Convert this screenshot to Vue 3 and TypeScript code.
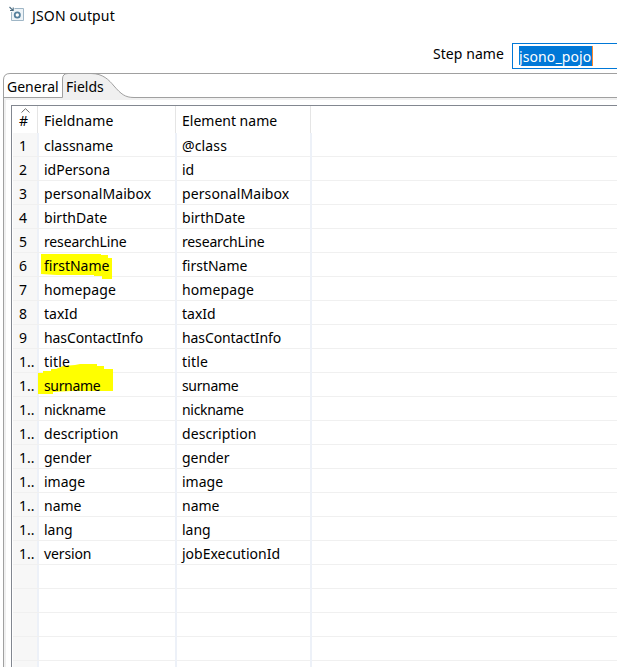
<script setup lang="ts">
interface FieldRow {
  no: string
  field: string
  element: string
  mark?: 'first' | 'surname'
}

const names: [string, string][] = [
  ['classname', '@class'],
  ['idPersona', 'id'],
  ['personalMaibox', 'personalMaibox'],
  ['birthDate', 'birthDate'],
  ['researchLine', 'researchLine'],
  ['firstName', 'firstName'],
  ['homepage', 'homepage'],
  ['taxId', 'taxId'],
  ['hasContactInfo', 'hasContactInfo'],
  ['title', 'title'],
  ['surname', 'surname'],
  ['nickname', 'nickname'],
  ['description', 'description'],
  ['gender', 'gender'],
  ['image', 'image'],
  ['name', 'name'],
  ['lang', 'lang'],
  ['version', 'jobExecutionId'],
  ['', ''],
  ['', ''],
  ['', ''],
  ['', ''],
  ['', ''],
]

const rows: FieldRow[] = names.map(([field, element], i) => ({
  no: !field ? '' : i < 9 ? String(i + 1) : '1..',
  field,
  element,
  mark: field === 'firstName' ? 'first' : field === 'surname' ? 'surname' : undefined,
}))

// Optical tracking for individual labels, in pixels
const tracking: Record<string, string> = {
  surname: '-0.35px',
  nickname: '-0.3px',
  personalMaibox: '0.1px',
  researchLine: '-0.15px',
  hasContactInfo: '-0.1px',
  homepage: '0.12px',
  description: '0.06px',
  birthDate: '0.06px',
  title: '0.15px',
  version: '-0.12px',
  '@class': '0.15px',
}
</script>

<template>
  <main class="dialog">
    <header class="title">
      <svg class="app-icon" width="17" height="16" viewBox="0 0 17 16">
        <path d="M5.5 2.5H14.5V14.5H2.5V6" fill="#edf3f7" stroke="#9fb6c6" />
        <circle cx="8.3" cy="9" r="2.6" fill="#fff" stroke="#55809d" stroke-width="1.8" />
        <path d="M.5 1L3.6 4.1M4.2 1.5V4.5H1" fill="none" stroke="#4a6b80" stroke-width="1.1" />
      </svg>
      <span>JSON output</span>
    </header>

    <div class="step">
      <label>Step name</label>
      <div class="input"><span class="selected">jsono_pojo</span></div>
    </div>

    <section class="folder">
      <nav class="tabs">
        <svg class="tab-shape" width="617" height="27" viewBox="0 0 617 27">
          <path d="M62.5 25V6Q62.5 .5 68 .5H91C103 .5 109 7 114 13C121 21 125 24.5 134 24.5H617V27H4V25Z" fill="#f0f0f0" />
          <path d="M3.5 27V7Q3.5 .5 10 .5H617M3.5 24.5H62.5V6Q62.5 .5 68 .5H91C103 .5 109 7 114 13C121 21 125 24.5 134 24.5H617" fill="none" stroke="#a0a0a0" />
        </svg>
        <span class="tab general">General</span>
        <span class="tab fields">Fields</span>
      </nav>
      <div class="body">
        <div class="table">
          <div class="row head">
            <div class="cell no">
              <svg class="sort" width="9" height="5" viewBox="0 0 9 5"><path d="M.5 4.5L4.5 .7L8.5 4.5" fill="none" stroke="#6b6b6b" /></svg>
              <span>#</span>
            </div>
            <div class="cell name"><span>Fieldname</span></div>
            <div class="cell element"><span>Element name</span></div>
          </div>
          <div v-for="(r, i) in rows" :key="i" class="row">
            <div class="cell no"><span>{{ r.no }}</span></div>
            <div class="cell name">
              <svg v-if="r.mark === 'first'" class="mark first" width="71" height="26" viewBox="0 0 71 26">
                <path d="M0 0H60V1H67V4H71V25H61V22H53V21H16L0 20Z" fill="#ff0" />
              </svg>
              <svg v-if="r.mark === 'surname'" class="mark surname" width="76" height="31" viewBox="0 0 76 31">
                <path d="M0 9H5V7H13V5H18L25 2L37 1L42 0H59V2H66V5H75V27H33L15 28V30H0Z" fill="#ff0" />
              </svg>
              <span :style="{ letterSpacing: tracking[r.field] }">{{ r.field }}</span>
            </div>
            <div class="cell element"><span :style="{ letterSpacing: tracking[r.element] }">{{ r.element }}</span></div>
          </div>
        </div>
      </div>
    </section>
  </main>
</template>

<style>
body {
  margin: 0;
  overflow: hidden;
}
</style>

<style scoped>
.dialog {
  width: 617px;
  height: 667px;
  overflow: hidden;
  background: #fff;
  color: #000;
  font: 14px/20px "Noto Sans", "Open Sans", sans-serif;
  white-space: nowrap;
}
.title {
  display: flex;
  height: 37px;
  padding: 6px 0 0 9px;
  box-sizing: border-box;
  letter-spacing: 0.15px;
}
.app-icon {
  flex: none;
  margin-right: 6px;
}
.step {
  display: flex;
  height: 36px;
  padding-left: 433px;
}
.step label {
  flex: none;
  width: 79px;
  padding-top: 7px;
  letter-spacing: 0.06px;
}
.input {
  box-sizing: border-box;
  flex: none;
  width: 130px;
  height: 26px;
  margin-top: 6px;
  padding: 2px 0 0 6px;
  border: 1px solid #0078d7;
}
.selected {
  display: block;
  width: 73px;
  height: 20px;
  border-right: 1px solid #ff8728;
  background: #0078d7;
  color: #fff;
  line-height: 22px;
  letter-spacing: 0.1px;
}
.tabs {
  position: relative;
  display: flex;
  height: 27px;
}
.tab-shape {
  position: absolute;
  inset: 0;
}
.tab {
  position: relative;
  padding-top: 4px;
}
.general {
  width: 59px;
  padding-left: 7px;
}
.body {
  box-sizing: border-box;
  height: 567px;
  margin-left: 3px;
  padding: 5px 0 0 5px;
  border-left: 1px solid #a0a0a0;
  box-shadow: inset 2px 0 #f0f0f0;
}
.table {
  margin-left: 2px;
  padding-left: 1px;
  border-top: 1px solid #828790;
  border-left: 1px solid #828790;
}
.row {
  display: grid;
  grid-template-columns: 26px 138px 135px 1fr;
  box-sizing: border-box;
  height: 24px;
  border-bottom: 1px solid #f0f0f0;
}
.cell {
  position: relative;
  box-sizing: border-box;
  padding: 3px 0 0 5px;
  height: 24px;
  border-right: 2px solid #edf1f8;
}
.cell span {
  position: relative;
  z-index: 1;
}
.no {
  height: 23px;
  padding-left: 6px;
  background: #f7f7f7;
}
.head {
  height: 27px;
  border-bottom: 0;
}
.head .cell {
  height: 27px;
  padding-top: 5px;
  border-right: 1px solid #e5e5e5;
  margin-right: 1px;
  background: #fff;
}
.head .name {
  letter-spacing: 0.1px;
}
.sort {
  position: absolute;
  top: 2px;
  left: 8px;
}
.mark {
  position: absolute;
}
.mark.first {
  top: 1px;
  left: 2px;
}
.mark.surname {
  top: -9px;
  left: -1px;
}
</style>
